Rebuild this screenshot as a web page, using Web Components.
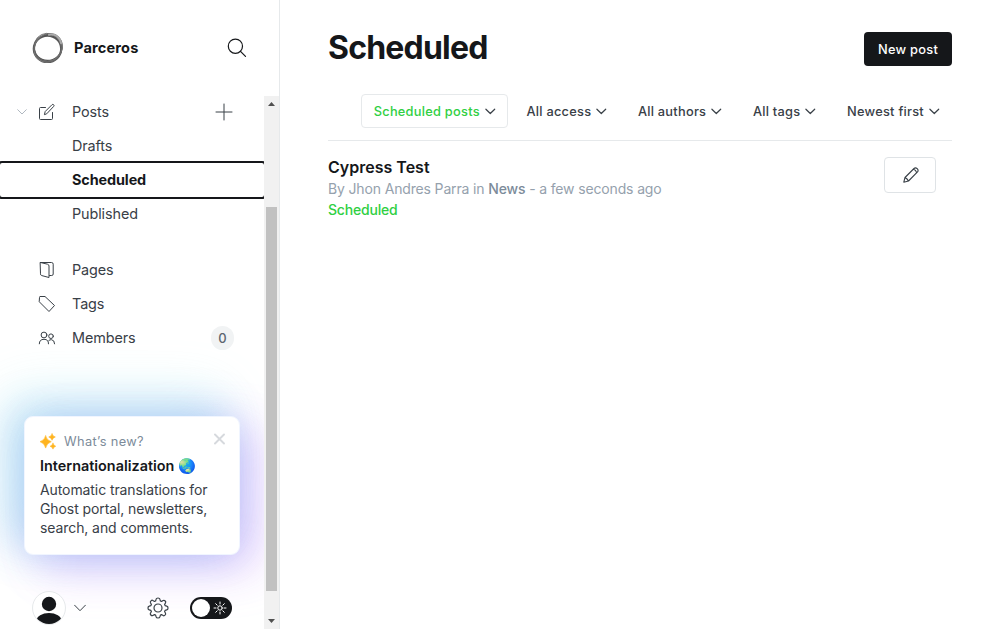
<!DOCTYPE html>
<html lang="en">
<head>
<meta charset="utf-8">
<title>Posts - Parceros</title>
<style>
html,body{margin:0;height:100%;overflow:hidden;background:#fff}
body{font-family:Inter,"Liberation Sans",sans-serif;color:#15171a;font-size:14px}
</style>
</head>
<body>
<gh-app></gh-app>
<script>
const define = (name, html) => customElements.define(name, class extends HTMLElement {
  constructor() {
    super();
    const t = document.createElement('template');
    t.innerHTML = '<style>*{box-sizing:border-box}svg{display:block;fill:none;stroke:currentColor;stroke-linecap:round;stroke-linejoin:round}</style>' + html;
    this.attachShadow({ mode: 'open' }).append(t.content.cloneNode(true));
  }
});

define('gh-nav-item', `
<style>
:host{display:flex;align-items:center;height:34px;padding-left:38px;padding-right:30px;color:#394047;font-size:14.4px;letter-spacing:-.1px;line-height:20px}
.icon{width:18px;flex:none;display:flex;justify-content:center;color:#394047}
.label{margin-left:16px;flex:1;white-space:nowrap}
:host([active]){color:#15171a;font-weight:700;outline:2px solid #15171a;border-radius:2px;position:relative}
</style>
<span class="icon"><slot name="icon"></slot></span><span class="label"><slot></slot></span><slot name="end"></slot>`);

define('gh-scrollbar', `
<style>
:host{display:flex;flex-direction:column;width:15px;flex:none;background:#f1f1f1;align-items:center}
svg{stroke:none;fill:#505050;flex:none}
.space{height:96px;flex:none}
.thumb{width:11px;height:384px;background:#c1c1c1}
.end{margin-top:auto}
</style>
<svg width="15" height="15"><path d="M4 10L7.5 6 11 10z"/></svg><div class="space"></div><div class="thumb"></div><svg class="end" width="15" height="15"><path d="M4 5L7.5 9 11 5z"/></svg>`);

define('gh-whats-new', `
<style>
:host{display:block;height:139px;border-radius:9px;background:#fff;padding:15px 16px 0;border:1px solid #f0f5ff;
box-shadow:-20px -22px 54px rgba(140,237,240,.24),-12px -6px 42px rgba(46,130,225,.28),10px 10px 44px rgba(117,86,240,.22),24px 14px 50px rgba(215,150,255,.22)}
.head{display:flex;align-items:center;height:18px;color:#7c8b9a;font-size:12.8px;letter-spacing:.36px}
.head span{margin-left:8px;flex:1}
.stars{stroke:#ffb41f;stroke-width:.6;fill:#ffb41f;margin-left:-1px;margin-top:1px}
.close{color:#d6d9dd;margin:-5px -2px 0 0}
h3{margin:6px 0 4px -1px;font-size:14.4px;line-height:20px;font-weight:600;color:#15171a;white-space:nowrap;letter-spacing:.01px}
p{margin:0 -10px 0 -1px;font-size:14px;letter-spacing:-.09px;line-height:19px;color:#394047;white-space:nowrap}
</style>
<div class="head"><svg class="stars" width="16" height="17" viewBox="0 0 17 17"><path d="M6 2.500Q7 7.200 12 8.700 7 10.200 6 15.500 5 10.200 0 8.700 5 7.200 6 2.500zM12.800.4Q13.500 3 16.300 3.700 13.500 4.400 12.800 7.200 12.100 4.400 9.300 3.700 12.100 3 12.800.4zM13.800 10.400Q14.400 12.900 16.700 13.500 14.400 14.100 13.800 16.600 13.200 14.100 10.700 13.500 13.200 12.900 13.800 10.400z"/></svg><span>What’s new?</span><svg class="close" width="12" height="12" stroke-width="1.9"><path d="M2 1.500l9 9M11 1.500l-9 9"/></svg></div>
<h3>Internationalization 🌏</h3>
<p>Automatic translations for<br>Ghost portal, newsletters,<br>search, and comments.</p>`);

define('gh-user-bar', `
<style>
:host{display:flex;align-items:center;height:34px;padding:0 32px 0 32px;color:#394047}
.avatar{width:34px;height:34px;border-radius:50%;background:#fff;border:1px solid #e6e9eb;overflow:hidden}
.avatar svg{stroke:none;fill:#15171a}
.chev{margin-left:8px}
.gear{margin-left:auto;margin-right:21px}
.toggle{width:42px;height:22px;border-radius:11px;background:#15171a;color:#fff;display:flex;align-items:center;justify-content:space-between;padding:0 5px 0 2px}
.knob{width:18px;height:18px;border-radius:50%;background:#fff}
</style>
<div class="avatar"><svg width="32" height="32"><circle cx="16" cy="12" r="7.2"/><ellipse cx="16" cy="29" rx="12.5" ry="8"/></svg></div>
<svg class="chev" width="12" height="8"><path d="M.6 1.2L6 6.7l5.4-5.5"/></svg>
<svg class="gear" width="22" height="22" viewBox="0 0 22 22" stroke-width="1.2"><path d="M9.1 2.2Q9.4 1 11 1T12.9 2.2L13.4 4 14.5 4.4 16.2 3.5Q17.2 3 18.2 4T18.5 5.9L17.6 7.5 18.1 8.6 19.8 9.1Q21 9.4 21 11T19.8 12.9L18.1 13.4 17.6 14.5 18.5 16.2Q19 17.2 18 18.2T16.1 18.5L14.5 17.6 13.4 18.1 12.9 19.8Q12.6 21 11 21T9.1 19.8L8.6 18.1 7.5 17.6 5.8 18.5Q4.8 19 3.8 18T3.5 16.1L4.4 14.5 3.9 13.4 2.2 12.9Q1 12.6 1 11T2.2 9.1L3.9 8.6 4.4 7.5 3.5 5.8Q3 4.8 4 3.8T5.9 3.5L7.5 4.4 8.6 4z"/><circle cx="11" cy="11" r="4"/></svg>
<div class="toggle"><span class="knob"></span><svg width="14" height="14" stroke-width="1"><circle cx="7" cy="7" r="2.2"/><path d="M7 1v2M7 11v2M1 7h2M11 7h2M2.700 2.700l1.500 1.500M9.800 9.800l1.500 1.500M2.700 11.300l1.500-1.500M9.800 4.200l1.500-1.500"/></svg></div>`);

define('gh-sidebar', `
<style>
:host{display:flex;flex-direction:column;width:280px;height:100%;flex:none;border-right:1px solid #e6e9eb}
header{height:96px;flex:none;display:flex;align-items:center;padding:0 32px 0 32px}
header b{font-size:14.6px;font-weight:700;letter-spacing:.15px;margin:-1px 0 0 10px;flex:1}
.body{display:flex;flex:1;min-height:0}
nav{width:264px;flex:none;overflow:hidden;display:flex;flex-direction:column}
.first{margin-top:-1px}
.posts{display:flex;align-items:center}
.posts gh-nav-item{flex:1}
.exp{margin-left:17px;margin-right:-27px;color:#b0b8c0}
.gap{height:22px;flex:none}
.badge{display:block;min-width:23px;height:24px;border-radius:12px;background:#f1f3f4;text-align:center;line-height:24px;font-size:13px;font-weight:500;color:#5d666f}
gh-whats-new{margin:61px 24px 36px}
</style>
<header>
<svg width="32" height="32" viewBox="0 0 32 32"><ellipse cx="15.500" cy="16.800" rx="13.700" ry="13.200" stroke="#555" stroke-width="2.200"/><ellipse cx="16.500" cy="15.600" rx="14" ry="12.800" stroke="#555" stroke-width="1.200" transform="rotate(-20 16 16)"/><ellipse cx="16.200" cy="16" rx="14.900" ry="13.300" stroke="#777" stroke-width="1.200" transform="rotate(-48 16 16)"/><ellipse cx="15.600" cy="16.200" rx="14.500" ry="13.400" stroke="#666" stroke-width=".8" transform="rotate(65 16 16)"/><path d="M17 2.800c6-1 11 2 12 8.400" stroke="#aaa" stroke-width="2"/></svg>
<b>Parceros</b>
<svg width="20" height="20" stroke-width="1.200"><circle cx="8.400" cy="8.200" r="7.100"/><path d="M13.500 13.300l5 5"/></svg>
</header>
<div class="body"><nav>
<div class="first posts"><svg class="exp" width="10" height="6"><path d="M.7.7L5 5 9.300.7"/></svg>
<gh-nav-item><svg slot="icon" width="18" height="18" style="margin-top:-1px"><path d="M7.500 4.500H2.500Q1.500 4.500 1.500 5.500V15.500Q1.500 16.500 2.500 16.500H13.500Q14.500 16.500 14.500 15.500V9.500M6.500 11.300L7.200 8.500 14 1.700Q14.800 1 15.600 1.700 16.500 2.500 15.700 3.400L9 10.500z"/></svg>Posts<svg slot="end" width="18" height="18" style="margin-right:1px"><path d="M9 1v16M1 9h16"/></svg></gh-nav-item></div>
<gh-nav-item>Drafts</gh-nav-item><gh-nav-item active>Scheduled</gh-nav-item><gh-nav-item>Published</gh-nav-item>
<div class="gap"></div>
<gh-nav-item><svg slot="icon" width="18" height="18"><path d="M2.500 1.500L9.500 3.200Q11 3.600 11 5V16.500L3.500 14.500Q2.500 14.200 2.500 13.200zM2.500 1.500H13.500Q15.200 1.500 15.200 3.200V13Q15.200 14.500 13.700 14.500H11.500"/></svg>Pages</gh-nav-item>
<gh-nav-item><svg slot="icon" width="18" height="18"><path d="M1.500 2Q1.500 1.500 2 1.500H7L16.500 10.500 11 16.500 1.500 7z"/></svg>Tags</gh-nav-item>
<gh-nav-item><svg slot="icon" width="18" height="18"><circle cx="6" cy="6" r="2.900"/><circle cx="13" cy="7.200" r="2.300"/><path d="M1.300 14.800Q1.300 10.300 6 10.300T10.500 14.800M10.800 11.500Q12 10.500 13.500 10.700 16.500 11 16.600 14.800"/></svg>Members<span slot="end" class="badge">0</span></gh-nav-item>
<gh-whats-new></gh-whats-new>
<gh-user-bar></gh-user-bar>
</nav><gh-scrollbar></gh-scrollbar></div>`);

define('gh-filter', `
<style>
:host{display:flex;align-items:center;height:34px;padding:0 11px 0 12px;border:1px solid transparent;border-radius:4px;font-size:12.8px;font-weight:500;color:#394047;letter-spacing:.26px;white-space:nowrap}
:host([selected]){border-color:#e6e9eb}
:host([selected]) span{color:#30cf43}
span{padding-top:1px}
svg{margin-left:5px}
</style><span><slot></slot></span><svg width="11" height="7" stroke-width="1.2"><path d="M.9 1.200L5.300 5.500 9.700 1.200"/></svg>`);

define('gh-post-row', `
<style>
:host{display:flex;justify-content:space-between;padding:16px 16px 0 0}
h3{margin:0;font-size:16px;font-weight:600;line-height:21px;color:#15171a}
p{margin:0;font-size:14px;line-height:21px;color:#95a1ad;letter-spacing:-.15px}
p b{font-weight:500;color:#7c8b9a}
.status{color:#30cf43;font-weight:500;letter-spacing:-.2px}
.edit{width:52px;height:36px;border:1px solid #dfe3e6;border-radius:4px;display:flex;align-items:center;justify-content:center;color:#394047;padding-left:1px}
</style>
<div><h3>Cypress Test</h3><p>By Jhon Andres Parra in <b>News</b> - a few seconds ago</p><p class="status">Scheduled</p></div>
<div class="edit"><svg width="16" height="16" stroke-width="1.1"><path d="M.8 15.200L2 10.500 11 1.500Q12.500.2 14.200 1.700 15.800 3.300 14.500 4.900L5.500 14zM2 10.500Q4.300 11.700 5.500 14M10.800 2.500Q12.800 2.800 13.500 5.300"/></svg></div>`);

define('gh-app', `
<style>
:host{display:flex;height:100vh}
main{flex:1;padding:0 48px}
.top{height:94px;display:flex;justify-content:space-between;align-items:center;padding-top:4px}
h1{margin:-2px 0 0;font-size:32px;font-weight:700;letter-spacing:-.8px;line-height:42px}
.new{height:34px;width:88px;border-radius:4px;background:#15171a;color:#fff;font-size:12.8px;font-weight:500;letter-spacing:.28px;display:flex;align-items:center;justify-content:center;padding-top:1px}
.filters{display:flex;justify-content:flex-end;height:47px;border-bottom:1px solid #e6e9eb;gap:5.6px}
</style>
<gh-sidebar></gh-sidebar>
<main><div class="top"><h1>Scheduled</h1><div class="new">New post</div></div>
<div class="filters"><gh-filter selected>Scheduled posts</gh-filter><gh-filter>All access</gh-filter><gh-filter>All authors</gh-filter><gh-filter>All tags</gh-filter><gh-filter>Newest first</gh-filter></div>
<gh-post-row></gh-post-row></main>`);
</script>
</body>
</html>
